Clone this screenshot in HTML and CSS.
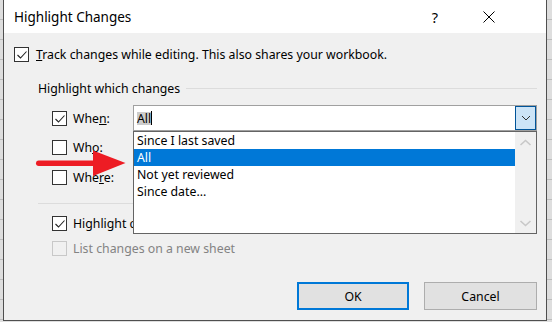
FILE: index.html
```html
<!DOCTYPE html>
<html>
<head>
<meta charset="utf-8">
<link rel="stylesheet" href="styles.css">
</head>
<body>
<div class="dialog">
  <div class="titlebar">
    <span class="title">Highlight Changes</span>
    <span class="help">?</span>
    <span class="close"><svg width="12" height="12" viewBox="0 0 12 12"><path d="M0.5 0.5L11.5 11.5M11.5 0.5L0.5 11.5" stroke="#000" stroke-width="1" fill="none"/></svg></span>
  </div>
  <div class="content">
    <div class="track">
      <span class="cb"><svg width="13" height="13" viewBox="0 0 13 13"><polyline points="2.5,7 5.5,10 11.5,3.5" fill="none" stroke="#222" stroke-width="1.1"/></svg></span>
      <span><u>T</u>rack changes while editing. This also shares your workbook.</span>
    </div>
    <div class="group">
      <div class="group-head"><span>Highlight which changes</span><span class="rule"></span></div>
      <div class="opt when">
        <span class="cb"><svg width="13" height="13" viewBox="0 0 13 13"><polyline points="2.5,7 5.5,10 11.5,3.5" fill="none" stroke="#222" stroke-width="1.1"/></svg></span>
        <span class="lbl">Whe<u>n</u>:</span>
        <div class="combo">
          <div class="val"><span class="sel">All</span><span class="caret"></span></div>
          <div class="ddbtn"><svg width="10" height="6" viewBox="0 0 10 6"><polyline points="1,1 5,5 9,1" fill="none" stroke="#333" stroke-width="1"/></svg></div>
        </div>
      </div>
      <div class="opt who">
        <span class="cb"></span>
        <span class="lbl">Wh<u>o</u>:</span>
      </div>
      <div class="opt where">
        <span class="cb"></span>
        <span class="lbl">Whe<u>r</u>e:</span>
      </div>
      <div class="sep"></div>
      <div class="opt screen">
        <span class="cb"><svg width="13" height="13" viewBox="0 0 13 13"><polyline points="2.5,7 5.5,10 11.5,3.5" fill="none" stroke="#222" stroke-width="1.1"/></svg></span>
        <span class="lbl">Highlight changes on screen</span>
      </div>
      <div class="opt list disabled">
        <span class="cb"></span>
        <span class="lbl">List changes on a new sheet</span>
      </div>
    </div>
    <div class="buttons">
      <div class="btn ok">OK</div>
      <div class="btn cancel">Cancel</div>
    </div>
  </div>
  <div class="dropdown">
    <div class="items">
      <div class="item">Since I last saved</div>
      <div class="item hl">All</div>
      <div class="item">Not yet reviewed</div>
      <div class="item">Since date...</div>
    </div>
    <div class="sb">
      <svg width="21" height="101" viewBox="0 0 21 101"><polyline points="5.5,13 10.5,8.5 15.5,13" fill="none" stroke="#c8c8c8" stroke-width="1.6"/><polyline points="5.5,89 10.5,93.5 15.5,89" fill="none" stroke="#c8c8c8" stroke-width="1.6"/></svg>
    </div>
  </div>
  <svg class="arrow" width="100" height="35" viewBox="30 145 100 35">
    <rect x="36" y="160.5" width="62" height="5.5" rx="2.75" fill="#ed1c24"/>
    <polygon points="93,150.5 125.5,163 93,176" fill="#ed1c24"/>
  </svg>
</div>
</body>
</html>
```

FILE: styles.css
```css
* { box-sizing: border-box; }
html, body { margin: 0; padding: 0; }
body {
  width: 552px;
  height: 322px;
  overflow: hidden;
  background-color: #dedede;
  background-image: repeating-linear-gradient(to bottom, #dedede 0, #dedede 19px, #bdbdbd 19px, #bdbdbd 20px);
  font-family: "Segoe UI", "Noto Sans", sans-serif;
  font-size: 12.3px;
  color: #000;
}
.dialog {
  position: relative;
  margin-left: 3px;
  width: 544px;
  height: 321px;
  border: 1px solid #4f4f4f;
  border-top: 0;
  background: #f0f0f0;
  display: flex;
  flex-direction: column;
}
.titlebar {
  height: 33px;
  flex: none;
  background: #fff;
  display: flex;
  align-items: center;
  padding-left: 10px;
  padding-right: 34px;
  font-size: 13.5px;
}
.title { flex: 1; }
.help { width: 20px; text-align: center; font-size: 14.5px; }
.close { width: 46px; margin-left: 21px; display: flex; justify-content: center; align-items: center; }
.close svg { display: block; }
.content {
  flex: 1;
  padding: 14px 9px 0 10px;
}
.cb {
  width: 15px;
  height: 15px;
  flex: none;
  border: 1px solid #333;
  background: #fff;
  display: flex;
}
.cb svg { display: block; }
.track {
  display: flex;
  align-items: center;
  gap: 7px;
  height: 15px;
}
.group { margin-left: 24px; }
.group-head {
  margin-top: 18px;
  height: 16px;
  display: flex;
  align-items: center;
}
.group-head .rule {
  flex: 1;
  height: 1px;
  background: #dcdcdc;
  margin-left: 6px;
}
.opt {
  display: flex;
  align-items: center;
  gap: 6px;
  height: 15px;
  padding-left: 14px;
}
.when { height: 26px; margin-top: 9px; }
.when .lbl { width: 54px; }
.who { margin-top: 9px; }
.where { margin-top: 15px; }
.sep { margin-top: 18px; height: 1px; background: #dcdcdc; }
.screen { margin-top: 12px; }
.list { margin-top: 10px; }
.disabled { color: #838383; }
.disabled .cb { border-color: #c8c8c8; background: #f0f0f0; }
.combo {
  flex: 1;
  height: 26px;
  border: 1px solid #a0a0a0;
  background: #fff;
  display: flex;
}
.val {
  flex: 1;
  padding-left: 3px;
  display: flex;
  align-items: center;
}
.sel { background: #cccccc; line-height: 13px; }
.caret { width: 1px; height: 14px; background: #000; }
.ddbtn {
  width: 21px;
  height: 24px;
  border: 1px solid #005499;
  background: #cce4f7;
  display: flex;
  align-items: center;
  justify-content: center;
}
.ddbtn svg { display: block; }
.buttons {
  margin-top: 26px;
  display: flex;
  justify-content: flex-end;
  gap: 15px;
}
.btn {
  height: 28px;
  background: #e1e1e1;
  display: flex;
  align-items: center;
  justify-content: center;
}
.ok { width: 112px; border: 2px solid #0078d7; }
.cancel { width: 113px; border: 1px solid #adadad; }
.dropdown {
  position: absolute;
  left: 129px;
  top: 131px;
  width: 404px;
  height: 103px;
  border: 1px solid #646464;
  background: #fff;
  display: flex;
}
.items { flex: 1; }
.item {
  height: 17px;
  line-height: 17px;
  padding-left: 3px;
}
.item.hl { background: #0078d7; color: #fff; }
.sb { width: 21px; background: #f0f0f0; }
.sb svg { display: block; }
.arrow {
  position: absolute;
  left: 26px;
  top: 145px;
}
```
